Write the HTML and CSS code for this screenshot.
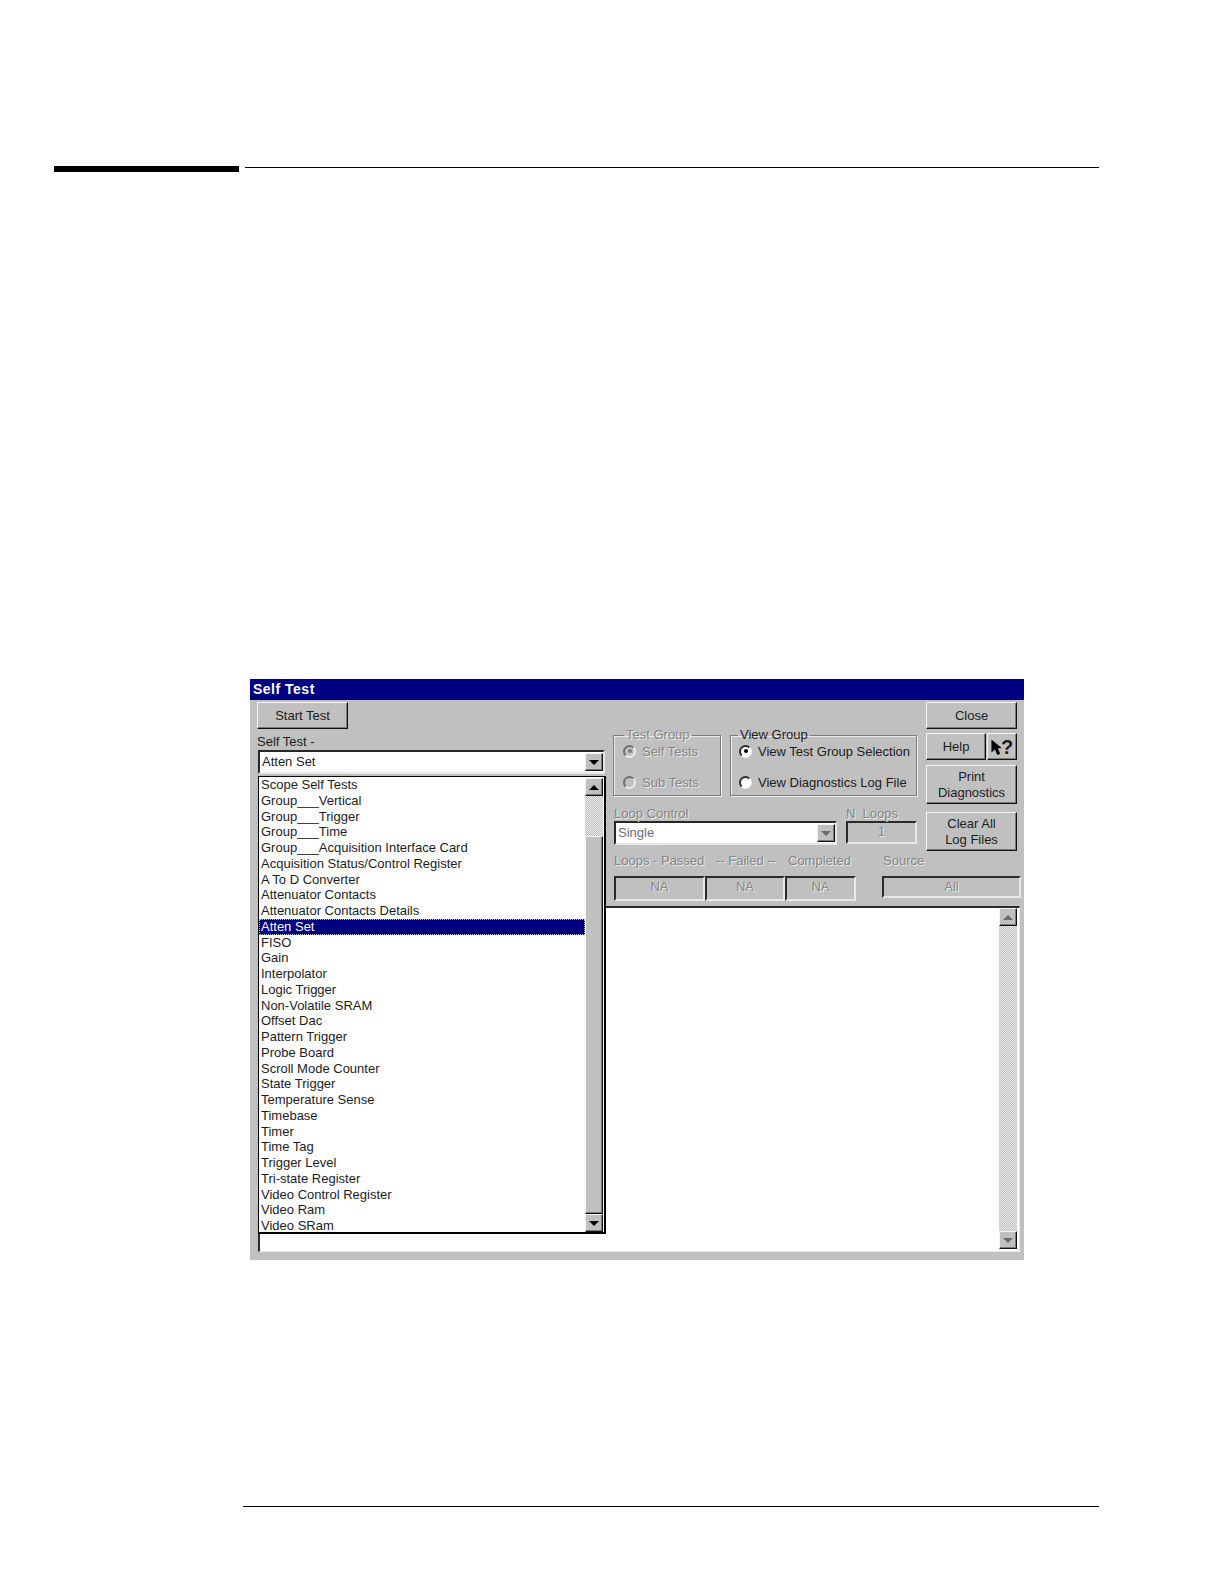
FILE: index.html
```html
<!DOCTYPE html>
<html>
<head>
  <meta charset="utf-8">
  <title>Self Test</title>
  <link rel="stylesheet" href="styles.css">
</head>
<body>
  <div class="head-rule">
    <div class="head-bar"></div>
    <div class="head-line"></div>
  </div>

  <div class="window">
    <div class="title-bar">Self Test</div>
    <div class="client">
      <div class="top">
        <div class="left-col">
          <button class="btn btn-start">Start Test</button>
          <div class="label label-self">Self Test -</div>
          <div class="combo combo-self">
            <span class="combo-value">Atten Set</span>
            <span class="scroll-btn combo-btn"><i class="arrow-down"></i></span>
          </div>
        </div>

        <div class="mid-col">
          <div class="groups">
            <fieldset class="group group-test disabled">
              <legend>Test Group</legend>
              <div class="radio-row"><span class="radio checked"></span>Self Tests</div>
              <div class="radio-row"><span class="radio"></span>Sub Tests</div>
            </fieldset>
            <fieldset class="group group-view">
              <legend>View Group</legend>
              <div class="radio-row"><span class="radio checked"></span>View Test Group Selection</div>
              <div class="radio-row"><span class="radio"></span>View Diagnostics Log File</div>
            </fieldset>
          </div>

          <div class="loop-row disabled">
            <div class="loop-control">
              <div class="label">Loop Control</div>
              <div class="combo combo-loop">
                <span class="combo-value">Single</span>
                <span class="scroll-btn combo-btn"><i class="arrow-down arrow-grey"></i></span>
              </div>
            </div>
            <div class="n-loops">
              <div class="label">N&nbsp; Loops</div>
              <div class="field field-n">1</div>
            </div>
          </div>

          <div class="counter-labels disabled">
            <div class="label">Loops - Passed</div>
            <div class="label">-- Failed --</div>
            <div class="label">Completed</div>
            <div class="label">Source</div>
          </div>
          <div class="counter-fields disabled">
            <div class="field field-passed">NA</div>
            <div class="field field-failed">NA</div>
            <div class="field field-done">NA</div>
            <div class="field field-source">All</div>
          </div>
        </div>

        <div class="right-col">
          <button class="btn btn-close">Close</button>
          <div class="help-row">
            <button class="btn btn-help">Help</button>
            <button class="btn btn-whats">
              <svg class="cursor-icon" viewBox="0 0 13 19" width="11" height="16"><path d="M0.5 0.5 L0.5 16 L4.5 12.5 L7.5 19 L11 17.5 L8 11 L13 11 Z" fill="#000"/></svg><span class="whats-mark">?</span>
            </button>
          </div>
          <button class="btn btn-print">Print<br>Diagnostics</button>
          <button class="btn btn-clear">Clear All<br>Log Files</button>
        </div>
      </div>

      <div class="log-box">
        <div class="scrollbar">
          <span class="scroll-btn"><i class="arrow-up arrow-grey"></i></span>
          <span class="scroll-track"></span>
          <span class="scroll-btn"><i class="arrow-down arrow-grey"></i></span>
        </div>
      </div>

      <!-- opened dropdown lies over the log box -->
      <div class="drop-list">
        <ul class="items">
          <li>Scope Self Tests</li>
          <li>Group___Vertical</li>
          <li>Group___Trigger</li>
          <li>Group___Time</li>
          <li>Group___Acquisition Interface Card</li>
          <li>Acquisition Status/Control Register</li>
          <li>A To D Converter</li>
          <li>Attenuator Contacts</li>
          <li>Attenuator Contacts Details</li>
          <li class="selected">Atten Set</li>
          <li>FISO</li>
          <li>Gain</li>
          <li>Interpolator</li>
          <li>Logic Trigger</li>
          <li>Non-Volatile SRAM</li>
          <li>Offset Dac</li>
          <li>Pattern Trigger</li>
          <li>Probe Board</li>
          <li>Scroll Mode Counter</li>
          <li>State Trigger</li>
          <li>Temperature Sense</li>
          <li>Timebase</li>
          <li>Timer</li>
          <li>Time Tag</li>
          <li>Trigger Level</li>
          <li>Tri-state Register</li>
          <li>Video Control Register</li>
          <li>Video Ram</li>
          <li>Video SRam</li>
        </ul>
        <div class="scrollbar scrollbar-list">
          <span class="scroll-btn"><i class="arrow-up"></i></span>
          <span class="scroll-track track-short"></span>
          <span class="scroll-thumb"></span>
          <span class="scroll-btn"><i class="arrow-down"></i></span>
        </div>
      </div>
    </div>
  </div>

  <div class="foot-line"></div>
</body>
</html>
```

FILE: styles.css
```css
* {
  box-sizing: border-box;
}
body {
  margin: 0;
  background: white;
  font-family: "Liberation Sans", Arial, sans-serif;
  font-size: 13px;
  color: #1c1c1c;
}

/* page rules */
.head-rule {
  display: flex;
  padding: 166px 0 0 54px;
}
.head-bar {
  width: 185px;
  height: 6px;
  background: #000;
}
.head-line {
  width: 854px;
  height: 1px;
  margin: 1px 0 0 6px;
  background: #000;
}
.foot-line {
  width: 856px;
  height: 1px;
  margin: 246px 0 0 243px;
  background: #000;
}

/* dialog */
.window {
  width: 774px;
  height: 581px;
  margin: 507px 0 0 250px;
  background: #c0c0c0;
}
.title-bar {
  height: 21px;
  padding-left: 3px;
  background: #000080;
  color: white;
  font-weight: bold;
  font-size: 14px;
  line-height: 21px;
  letter-spacing: 0.5px;
}
.client {
  position: relative;
  height: 560px;
  padding: 2px 0 0 7px;
}
.top {
  display: flex;
  height: 204px;
}
.left-col {
  width: 348px;
}
.mid-col {
  width: 304px;
  margin-left: 8px;
  padding-top: 25px;
}
.right-col {
  width: 91px;
  margin-left: 9px;
}

/* buttons */
.btn {
  display: block;
  width: 91px;
  height: 27px;
  padding: 0;
  background: #c0c0c0;
  border: 1px solid;
  border-color: #f4f4f4 #111 #111 #f4f4f4;
  box-shadow: inset -1px -1px 0 #7a7a7a;
  font-family: inherit;
  font-size: 13px;
  line-height: 16px;
  color: #1c1c1c;
}
.help-row {
  display: flex;
  gap: 1px;
  margin-top: 4px;
}
.btn-help {
  width: 60px;
}
.btn-whats {
  display: flex;
  align-items: center;
  justify-content: center;
  width: 30px;
}
.whats-mark {
  margin-left: -1px;
  font-size: 20px;
  font-weight: bold;
  line-height: 20px;
}
.btn-print {
  height: 39px;
  margin-top: 5px;
}
.btn-clear {
  height: 39px;
  margin-top: 8px;
}

/* labels */
.label {
  line-height: 15px;
  white-space: nowrap;
}
.label-self {
  margin-top: 5px;
  line-height: 16px;
}
.disabled,
.disabled .label {
  color: #858585;
  text-shadow: 1px 1px 0 #ececec;
}

/* combo boxes */
.combo {
  display: flex;
  align-items: center;
  justify-content: space-between;
  height: 24px;
  background: white;
  border: 2px solid;
  border-color: #262626 #e8e8e8 #e8e8e8 #262626;
}
.combo-self {
  width: 347px;
  margin-left: 1px;
}
.combo-loop {
  width: 223px;
}
.combo-value {
  padding: 0 0 1px 2px;
}
.combo-loop .combo-value {
  color: #6e6e6e;
  text-shadow: none;
}

/* scroll parts */
.scroll-btn {
  display: flex;
  flex: none;
  align-items: center;
  justify-content: center;
  width: 18px;
  height: 18px;
  background: #c0c0c0;
  border: 1px solid;
  border-color: #f4f4f4 #111 #111 #f4f4f4;
  box-shadow: inset -1px -1px 0 #7a7a7a;
}
.arrow-down,
.arrow-up {
  width: 0;
  height: 0;
  border-left: 5px solid transparent;
  border-right: 5px solid transparent;
}
.arrow-down {
  border-top: 5px solid #000;
}
.arrow-up {
  border-bottom: 5px solid #000;
}
.arrow-down.arrow-grey {
  border-top-color: #6a6a6a;
}
.arrow-up.arrow-grey {
  border-bottom-color: #6a6a6a;
}
.scrollbar {
  display: flex;
  flex-direction: column;
  width: 18px;
}
.scroll-track {
  flex: 1;
  background: repeating-conic-gradient(#ededed 0 25%, #bcbcbc 0 50%) 0 0 / 2px 2px;
}
.track-short {
  flex: none;
  height: 40px;
}
.scroll-thumb {
  flex: 1;
  background: #c0c0c0;
  border: 1px solid;
  border-color: #f4f4f4 #111 #111 #f4f4f4;
  box-shadow: inset -1px -1px 0 #7a7a7a;
}

/* radio groups */
.groups {
  display: flex;
  gap: 9px;
}
.group {
  flex: none;
  height: 69px;
  margin: 0;
  padding: 0 0 5px 8px;
  border: 1px solid #7c7c7c;
  box-shadow: 1px 1px 0 #ececec, inset 1px 1px 0 #ececec;
}
.group legend {
  padding: 0 2px;
  margin-left: -1px;
  line-height: 16px;
}
.group-test {
  width: 108px;
  padding-left: 9px;
}
.group-test legend {
  margin-left: 1px;
}
.group-view {
  width: 187px;
}
.radio-row {
  display: flex;
  align-items: center;
  gap: 6px;
  height: 16px;
  white-space: nowrap;
}
.radio-row + .radio-row {
  margin-top: 15px;
}
.radio {
  display: flex;
  flex: none;
  align-items: center;
  justify-content: center;
  width: 13px;
  height: 13px;
  background: white;
  border: 2px solid;
  border-color: #2a2a2a #f4f4f4 #f4f4f4 #2a2a2a;
  border-radius: 50%;
}
.radio.checked::after {
  content: "";
  width: 4px;
  height: 4px;
  border-radius: 50%;
  background: #000;
}
.disabled .radio {
  background: #c0c0c0;
  border-color: #6e6e6e #ececec #ececec #6e6e6e;
}
.disabled .radio.checked::after {
  background: #7a7a7a;
}

/* disabled loop fields */
.loop-row {
  display: flex;
  gap: 9px;
  margin: 10px 0 0 1px;
}
.field {
  height: 25px;
  border: 2px solid;
  border-color: #2a2a2a #e8e8e8 #e8e8e8 #2a2a2a;
  text-align: center;
  line-height: 18px;
}
.field-n {
  width: 71px;
  height: 23px;
  line-height: 17px;
}
.counter-labels {
  display: grid;
  grid-template-columns: 102px 72px 95px auto;
  width: 405px;
  margin: 8px 0 0 1px;
}
.counter-fields {
  display: flex;
  width: 407px;
  margin: 8px 0 0 1px;
}
.field-passed {
  width: 91px;
}
.field-failed {
  width: 80px;
}
.field-done {
  width: 71px;
}
.field-source {
  width: 139px;
  height: 22px;
  margin-left: 26px;
}

/* log output */
.log-box {
  display: flex;
  justify-content: flex-end;
  width: 762px;
  height: 346px;
  margin-left: 1px;
  padding: 0 2px 2px 0;
  background: white;
  border: 2px solid;
  border-color: #2a2a2a #e8e8e8 #e8e8e8 #2a2a2a;
  border-right-width: 1px;
  border-bottom-width: 1px;
}

/* opened dropdown */
.drop-list {
  position: absolute;
  top: 76px;
  left: 8px;
  display: flex;
  width: 348px;
  height: 458px;
  padding-right: 1px;
  background: white;
  border: 1px solid #000;
  border-right-width: 2px;
  border-bottom-width: 2px;
}
.items {
  flex: 1;
  margin: 0;
  padding: 0;
  list-style: none;
}
.items li {
  height: 15.75px;
  padding-left: 2px;
  line-height: 15.75px;
  white-space: nowrap;
}
.items .selected {
  background: #000080;
  color: white;
  outline: 1px dotted #c0c0c0;
  outline-offset: -1px;
}
.scrollbar-list {
  padding-top: 1px;
}
```
